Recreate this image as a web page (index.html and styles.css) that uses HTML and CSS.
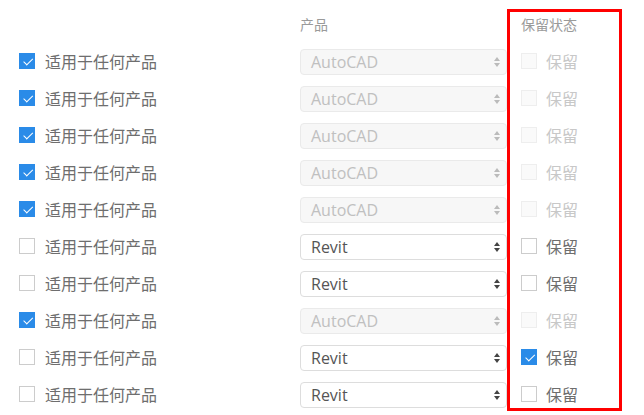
FILE: index.html
```html
<!DOCTYPE html>
<html lang="zh">
<head>
<meta charset="utf-8">
<link rel="stylesheet" href="styles.css">
</head>
<body>
<div class="table">
  <div class="col col-name">
    <div class="head"></div>
    <div class="row"><span class="cb on"></span><span class="label">适用于任何产品</span></div>
    <div class="row"><span class="cb on"></span><span class="label">适用于任何产品</span></div>
    <div class="row"><span class="cb on"></span><span class="label">适用于任何产品</span></div>
    <div class="row"><span class="cb on"></span><span class="label">适用于任何产品</span></div>
    <div class="row"><span class="cb on"></span><span class="label">适用于任何产品</span></div>
    <div class="row"><span class="cb"></span><span class="label">适用于任何产品</span></div>
    <div class="row"><span class="cb"></span><span class="label">适用于任何产品</span></div>
    <div class="row"><span class="cb on"></span><span class="label">适用于任何产品</span></div>
    <div class="row"><span class="cb"></span><span class="label">适用于任何产品</span></div>
    <div class="row"><span class="cb"></span><span class="label">适用于任何产品</span></div>
  </div>
  <div class="col col-product">
    <div class="head">产品</div>
    <div class="row"><div class="select disabled"><span>AutoCAD</span><svg class="arr" width="6" height="10" viewBox="0 0 6 10"><path d="M3 0L6 4H0Z M3 10L0 6H6Z"/></svg></div></div>
    <div class="row"><div class="select disabled"><span>AutoCAD</span><svg class="arr" width="6" height="10" viewBox="0 0 6 10"><path d="M3 0L6 4H0Z M3 10L0 6H6Z"/></svg></div></div>
    <div class="row"><div class="select disabled"><span>AutoCAD</span><svg class="arr" width="6" height="10" viewBox="0 0 6 10"><path d="M3 0L6 4H0Z M3 10L0 6H6Z"/></svg></div></div>
    <div class="row"><div class="select disabled"><span>AutoCAD</span><svg class="arr" width="6" height="10" viewBox="0 0 6 10"><path d="M3 0L6 4H0Z M3 10L0 6H6Z"/></svg></div></div>
    <div class="row"><div class="select disabled"><span>AutoCAD</span><svg class="arr" width="6" height="10" viewBox="0 0 6 10"><path d="M3 0L6 4H0Z M3 10L0 6H6Z"/></svg></div></div>
    <div class="row"><div class="select"><span>Revit</span><svg class="arr" width="6" height="10" viewBox="0 0 6 10"><path d="M3 0L6 4H0Z M3 10L0 6H6Z"/></svg></div></div>
    <div class="row"><div class="select"><span>Revit</span><svg class="arr" width="6" height="10" viewBox="0 0 6 10"><path d="M3 0L6 4H0Z M3 10L0 6H6Z"/></svg></div></div>
    <div class="row"><div class="select disabled"><span>AutoCAD</span><svg class="arr" width="6" height="10" viewBox="0 0 6 10"><path d="M3 0L6 4H0Z M3 10L0 6H6Z"/></svg></div></div>
    <div class="row"><div class="select"><span>Revit</span><svg class="arr" width="6" height="10" viewBox="0 0 6 10"><path d="M3 0L6 4H0Z M3 10L0 6H6Z"/></svg></div></div>
    <div class="row"><div class="select"><span>Revit</span><svg class="arr" width="6" height="10" viewBox="0 0 6 10"><path d="M3 0L6 4H0Z M3 10L0 6H6Z"/></svg></div></div>
  </div>
  <div class="col col-keep">
    <div class="head">保留状态</div>
    <div class="row dis"><span class="cb dis"></span><span class="label">保留</span></div>
    <div class="row dis"><span class="cb dis"></span><span class="label">保留</span></div>
    <div class="row dis"><span class="cb dis"></span><span class="label">保留</span></div>
    <div class="row dis"><span class="cb dis"></span><span class="label">保留</span></div>
    <div class="row dis"><span class="cb dis"></span><span class="label">保留</span></div>
    <div class="row"><span class="cb"></span><span class="label">保留</span></div>
    <div class="row"><span class="cb"></span><span class="label">保留</span></div>
    <div class="row dis"><span class="cb dis"></span><span class="label">保留</span></div>
    <div class="row"><span class="cb on"></span><span class="label">保留</span></div>
    <div class="row"><span class="cb"></span><span class="label">保留</span></div>
  </div>
</div>
</body>
</html>
```
FILE: styles.css
```css
html, body {
  margin: 0;
  background: #fff;
}
body {
  font-family: "Open Sans", "Noto Sans CJK SC", sans-serif;
  color: #666;
}
.table {
  display: flex;
  padding-top: 9px;
}
.col {
  display: flex;
  flex-direction: column;
  gap: 11px;
  box-sizing: border-box;
  border: 3px solid transparent;
  border-left: 0;
  border-right: 0;
}
.col-name {
  width: 300px;
  padding-left: 19px;
}
.col-product {
  width: 207px;
}
.col-keep {
  width: 115px;
  border: 3px solid #f00;
  padding-left: 11px;
}
.head {
  height: 23px;
  padding-bottom: 3px;
  display: flex;
  align-items: center;
  font-size: 14px;
  color: #9a9a9a;
  font-family: "Noto Sans CJK SC", sans-serif;
}
.row {
  height: 26px;
  display: flex;
  align-items: center;
}
.label {
  font-family: "Noto Sans CJK SC", sans-serif;
  font-size: 16px;
  color: #6e6e6e;
  margin-left: 10px;
  margin-top: -2px;
  line-height: 20px;
}
.col-keep .label {
  margin-left: 9px;
}
.row.dis .label {
  color: #c8c8c8;
}
.cb {
  width: 16px;
  height: 16px;
  box-sizing: border-box;
  border: 1px solid #ccc;
  background: #fff;
  margin-top: -3px;
  flex: none;
  position: relative;
}
.cb.dis {
  border-color: #eee;
  background: #fafafa;
}
.cb.on {
  background: #2a8be8;
  border-color: #2a8be8;
}
.cb.on::after {
  content: "";
  position: absolute;
  left: 3px;
  top: 2px;
  width: 8px;
  height: 4px;
  border-left: 1.5px solid #fff;
  border-bottom: 1.5px solid #fff;
  transform: rotate(-45deg) translate(-1px, 2px);
}
.select {
  width: 100%;
  height: 26px;
  box-sizing: border-box;
  border: 1px solid #ddd;
  border-radius: 4px;
  display: flex;
  align-items: center;
  justify-content: space-between;
  padding: 0 6px 0 10px;
  font-size: 16px;
  color: #555;
  background: #fff;
}
.select .arr {
  fill: #444;
}
.select.disabled {
  background: #f7f7f7;
  border-color: #eaeaea;
  color: #c0c0c0;
}
.select.disabled .arr {
  fill: #bbb;
}
```
